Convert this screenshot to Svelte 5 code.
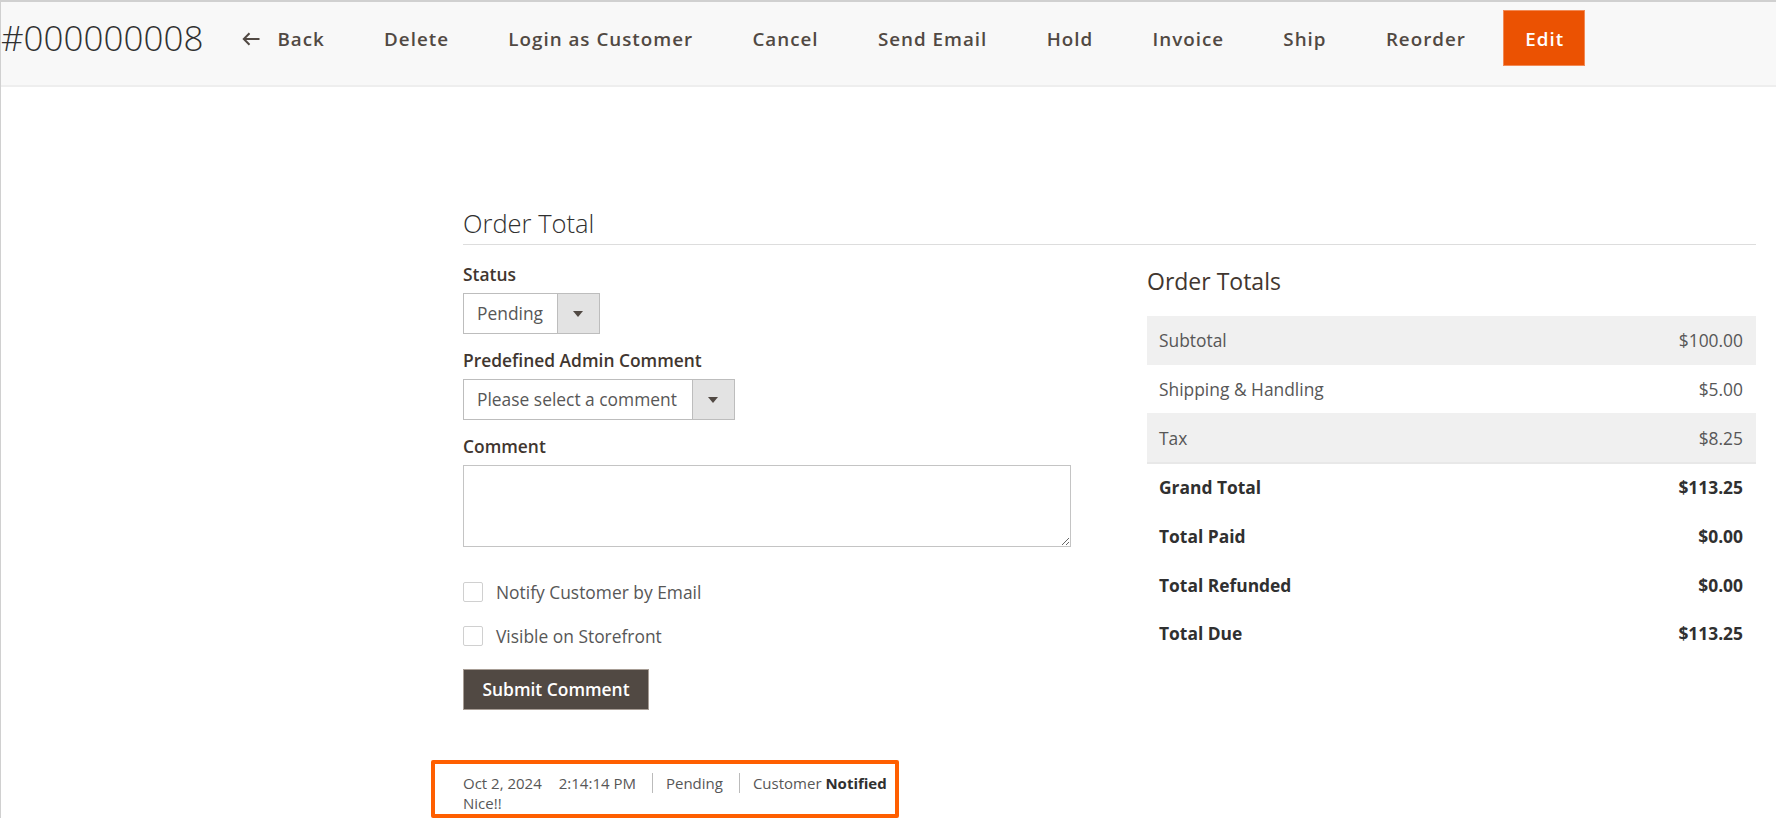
<script>
    const actions = ['Delete', 'Login as Customer', 'Cancel', 'Send Email', 'Hold', 'Invoice', 'Ship', 'Reorder'];

    const totals = [
        { label: 'Subtotal', value: '$100.00' },
        { label: 'Shipping & Handling', value: '$5.00' },
        { label: 'Tax', value: '$8.25' }
    ];

    const summary = [
        { label: 'Grand Total', value: '$113.25' },
        { label: 'Total Paid', value: '$0.00' },
        { label: 'Total Refunded', value: '$0.00' },
        { label: 'Total Due', value: '$113.25' }
    ];
</script>

<div class="page">
    <header class="toolbar">
        <h1 class="order-number">#000000008</h1>
        <div class="actions">
            <button class="action back">
                <svg width="18" height="14" viewBox="0 0 18 14" fill="none" stroke="currentColor" stroke-width="2">
                    <path d="M17.5 7H2M7.5 1.2 1.8 7l5.7 5.8" />
                </svg>
                Back
            </button>
            {#each actions as action}
                <button class="action">{action}</button>
            {/each}
            <button class="action primary">Edit</button>
        </div>
    </header>

    <main class="content">
        <h2 class="section-title">Order Total</h2>
        <div class="columns">
            <form class="comment-form">
                <label class="field-label" for="status">Status</label>
                <div class="select-wrap status">
                    <select id="status"><option>Pending</option></select>
                    <span class="select-arrow"></span>
                </div>

                <label class="field-label" for="predefined">Predefined Admin Comment</label>
                <div class="select-wrap predefined">
                    <select id="predefined"><option>Please select a comment</option></select>
                    <span class="select-arrow"></span>
                </div>

                <label class="field-label" for="comment">Comment</label>
                <textarea id="comment"></textarea>

                <label class="check first"><input type="checkbox" /> Notify Customer by Email</label>
                <label class="check"><input type="checkbox" /> Visible on Storefront</label>

                <button type="button" class="submit">Submit Comment</button>
            </form>

            <section class="totals">
                <h3>Order Totals</h3>
                <div class="total-rows">
                    {#each totals as row}
                        <div class="total-row">
                            <span>{row.label}</span>
                            <span>{row.value}</span>
                        </div>
                    {/each}
                </div>
                {#each summary as row}
                    <div class="summary-row">
                        <span>{row.label}</span>
                        <span>{row.value}</span>
                    </div>
                {/each}
            </section>
        </div>

        <div class="note">
            <div class="note-meta">
                <span class="note-date">Oct 2, 2024</span>
                <span class="note-time">2:14:14 PM</span>
                <span class="note-status">Pending</span>
                <span class="note-customer">Customer <strong>Notified</strong></span>
            </div>
            <div class="note-text">Nice!!</div>
        </div>
    </main>
</div>

<style>
    :global(body) {
        background: #fff;
        overflow: hidden;
    }
    .page {
        height: 818px;
        box-sizing: border-box;
        border-left: 1px solid #d0d0d0;
        font-family: "Open Sans", sans-serif;
        color: #41362f;
    }
    .toolbar {
        display: flex;
        align-items: flex-start;
        height: 87px;
        box-sizing: border-box;
        padding-top: 8px;
        background: #f8f8f8;
        border-top: 2px solid #d0d0d0;
        border-bottom: 2px solid #eee;
    }
    .order-number {
        margin: 0;
        font-size: 35px;
        font-weight: 300;
        line-height: 56px;
        color: #303030;
    }
    .actions {
        display: flex;
        gap: 15.33px;
        margin-left: 17px;
    }
    .action {
        height: 56px;
        padding: 1px 22px 0;
        border: 0;
        background: none;
        font: 600 18.8px "Open Sans", sans-serif;
        letter-spacing: 1px;
        color: #514943;
        cursor: pointer;
    }
    .back {
        display: flex;
        align-items: center;
        gap: 17px;
    }
    .primary {
        padding: 1px 20px 0 21px;
        background: #eb5202;
        border: 1px solid #f28a55;
        color: #fff;
    }
    .content {
        padding: 0 20px 0 462px;
    }
    .section-title {
        margin: 118px 0 0;
        padding-bottom: 3px;
        border-bottom: 1px solid #ddd;
        font-size: 25.5px;
        line-height: 36px;
        font-weight: 300;
        color: #303030;
    }
    .columns {
        display: flex;
        justify-content: space-between;
    }
    .comment-form {
        display: flex;
        flex-direction: column;
        align-items: flex-start;
        width: 608px;
    }
    .field-label {
        font-size: 17.4px;
        font-weight: 600;
        line-height: 22px;
        color: #41362f;
    }
    .comment-form > .field-label:first-child {
        margin-top: 18px;
    }
    .select-wrap {
        display: flex;
        height: 41px;
        box-sizing: border-box;
        margin: 8px 0 15px;
        border: 1px solid #bdbdbd;
        background: #fff;
    }
    select {
        appearance: none;
        border: 0;
        background: none;
        padding: 0 0 2px 13px;
        font: 400 17.4px "Open Sans", sans-serif;
        color: #575757;
        outline: none;
    }
    .status select {
        width: 93px;
    }
    .predefined select {
        width: 228px;
    }
    .select-arrow {
        position: relative;
        width: 41px;
        border-left: 1px solid #bdbdbd;
        background: #e3e3e3;
    }
    .select-arrow::after {
        content: '';
        position: absolute;
        left: 15px;
        top: 17px;
        border: 5px solid transparent;
        border-top: 6px solid #514943;
        border-bottom: 0;
    }
    textarea {
        width: 608px;
        height: 82px;
        box-sizing: border-box;
        margin: 8px 0 0;
        border: 1.5px solid #c4c4c4;
        padding: 8px;
        font: 400 16px "Open Sans", sans-serif;
    }
    .check {
        display: flex;
        align-items: center;
        gap: 13px;
        height: 22px;
        margin-top: 22px;
        font-size: 17.4px;
        color: #575757;
    }
    .check.first {
        margin-top: 34px;
    }
    .check input {
        appearance: none;
        width: 20px;
        height: 20px;
        margin: 0;
        border: 1.5px solid #d0d0d0;
        border-radius: 2px;
        background: #fff;
    }
    .submit {
        width: 186px;
        height: 41px;
        margin-top: 22px;
        padding: 0 0 2px;
        border: 1px solid #a79d95;
        background: #514943;
        color: #fff;
        font: 600 17.4px "Open Sans", sans-serif;
        cursor: pointer;
    }
    .totals {
        width: 609px;
    }
    .totals h3 {
        margin: 21px 0 0;
        font-size: 23px;
        line-height: 30px;
        font-weight: 400;
        color: #41362f;
    }
    .total-rows {
        margin: 20px 0 -1px;
        border-bottom: 2px solid #e8e8e8;
    }
    .total-row, .summary-row {
        display: flex;
        justify-content: space-between;
        align-items: center;
        padding: 0 13px 0 12px;
        height: 48.7px;
        font-size: 17.4px;
        color: #575757;
    }
    .total-row:nth-child(odd) {
        background: #f0f0f0;
    }
    .summary-row {
        font-weight: 700;
        color: #303030;
    }
    .note {
        margin: 50px 0 0 -32px;
        width: 468px;
        height: 58px;
        box-sizing: border-box;
        padding: 9px 0 0 28px;
        border: 4px solid #ff5f00;
        border-radius: 2px;
        font-size: 15px;
        line-height: 20px;
        color: #575757;
    }
    .note-meta {
        display: flex;
        align-items: center;
    }
    .note-time {
        margin-left: 17px;
        padding-right: 16px;
        border-right: 1px solid #bbb;
    }
    .note-status {
        padding: 0 16px 0 13px;
        border-right: 1px solid #bbb;
    }
    .note-customer {
        padding-left: 13px;
    }
    .note-customer strong {
        color: #303030;
    }
</style>
